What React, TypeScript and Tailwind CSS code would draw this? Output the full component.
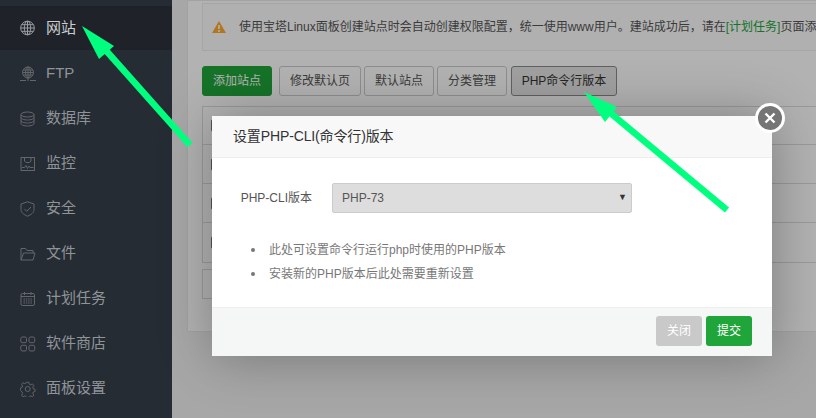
import type { ReactNode } from 'react'

const font = '[font-family:"Liberation_Sans","Noto_Sans_CJK_SC",sans-serif]'

function Icon({ children }: { children: ReactNode }) {
  return (
    <svg width="16" height="16" viewBox="0 0 16 16" fill="none" stroke="currentColor" strokeWidth="1" className="shrink-0">
      {children}
    </svg>
  )
}

const menu: { label: string; active?: boolean; icon: ReactNode }[] = [
  {
    label: '网站',
    active: true,
    icon: (
      <Icon>
        <circle cx="7.500" cy="8" r="6.800" />
        <ellipse cx="7.500" cy="8" rx="3.200" ry="6.800" />
        <path d="M.7 8h13.600M1.700 4.700h11.600M1.700 11.300h11.600M7.500 1.200v13.600" />
      </Icon>
    ),
  },
  {
    label: 'FTP',
    icon: (
      <Icon>
        <circle cx="8" cy="6.500" r="5.500" />
        <ellipse cx="8" cy="6.500" rx="2.500" ry="5.500" />
        <path d="M2.500 6.500h11M3 4h10M3 9h10M8 1v14M0 14.500h6M10 14.500h6" />
      </Icon>
    ),
  },
  {
    label: '数据库',
    icon: (
      <Icon>
        <ellipse cx="7.500" cy="3.500" rx="6.500" ry="2.500" />
        <path d="M1 3.500v9c0 1.400 3 2.500 6.500 2.500s6.500-1.100 6.500-2.500v-9M1 6.500c0 1.400 3 2.500 6.500 2.500S14 7.900 14 6.500M1 9.500c0 1.400 3 2.500 6.500 2.500S14 10.900 14 9.500" />
      </Icon>
    ),
  },
  {
    label: '监控',
    icon: (
      <Icon>
        <rect x="1" y="1.500" width="13.500" height="13" />
        <path d="M4.500 2v3l1.500 1.500h3.500L11 5V2M2 11.500h2.500l1.500-2 1.500 3 1.500-2.500 1 1.500h3.500" />
      </Icon>
    ),
  },
  {
    label: '安全',
    icon: (
      <Icon>
        <path d="M7.500 .8 14 3v5.500c0 3-2.500 5-6.500 6.700C3.500 13.500 1 11.500 1 8.500V3z" />
        <path d="M4.500 8l2.300 2.300L11 6" />
      </Icon>
    ),
  },
  {
    label: '文件',
    icon: (
      <Icon>
        <path d="M1 14V2.500h4.500l1.500 2h6V7M1 14h12l2-7H3.500z" />
      </Icon>
    ),
  },
  {
    label: '计划任务',
    icon: (
      <Icon>
        <rect x="1" y="2.500" width="13.500" height="12" rx="1.500" />
        <path d="M4.500 1v3M11 1v3M1 5.500h13.500" />
        <path d="M3.500 8h8.500M3.500 10h8.500M3.500 12h8.500" strokeDasharray="1.500 .8" />
      </Icon>
    ),
  },
  {
    label: '软件商店',
    icon: (
      <Icon>
        <rect x=".8" y="1" width="5.700" height="5.700" rx="1.500" />
        <rect x="9" y="1" width="5.700" height="5.700" rx="1.500" />
        <rect x=".8" y="9.300" width="5.700" height="5.700" rx="1.500" />
        <rect x="9" y="9.300" width="5.700" height="5.700" rx="1.500" />
      </Icon>
    ),
  },
  {
    label: '面板设置',
    icon: (
      <Icon>
        <circle cx="7.700" cy="8" r="2.500" />
        <path d="M6.500 1h2.400l.4 2 1.500.7 1.800-1 1.500 1.800-1.100 1.700.5 1.500 1.900.6v2.300l-1.900.6-.5 1.500 1.100 1.700-1.500 1.800-1.800-1-1.500.7-.4 2H6.500l-.4-2-1.500-.7-1.800 1-1.500-1.800 1.100-1.700-.5-1.500L0 9.300V7l1.900-.6.500-1.500-1.100-1.700 1.500-1.800 1.800 1 1.500-.7z" transform="translate(.3 .3) scale(.96)" />
      </Icon>
    ),
  },
]

const pageButtons = [
  { label: '修改默认页', width: 'w-[82px]' },
  { label: '默认站点', width: 'w-[70px]' },
  { label: '分类管理', width: 'w-[70px]' },
]

// the two arrows drawn over the screenshot
function Arrow({ x1, y1, x2, y2, head }: { x1: number; y1: number; x2: number; y2: number; head: string }) {
  return (
    <svg width="816" height="418" viewBox="0 0 816 418" className="pointer-events-none absolute left-0 top-0 z-50">
      <line x1={x1} y1={y1} x2={x2} y2={y2} stroke="#00ff7f" strokeWidth="6.500" />
      <polygon points={head} fill="#00ff7f" />
    </svg>
  )
}

export default function App() {
  return (
    <div className={`relative flex h-[418px] w-[816px] overflow-hidden bg-[#f0f0f0] ${font}`}>
      <aside className="z-20 flex w-[172px] shrink-0 flex-col bg-[#262c33] pt-[6px]">
        {menu.map((m) => (
          <div
            key={m.label}
            className={`flex items-center gap-[10px] pl-[20px] text-[15px] ${
              m.active ? 'mb-px h-[44px] bg-[#1f2329] text-[#c9cdd1]' : 'h-[45px] text-[#8f9499]'
            }`}
          >
            <span className={m.active ? 'text-[#9a9ea3]' : 'text-[#62676c]'}>{m.icon}</span>
            <span>{m.label}</span>
          </div>
        ))}
      </aside>

      <main className="flex-1 overflow-hidden pl-[15px]">
        <div className="h-[332px] w-[660px] border border-[#e8e8e8] bg-white pl-[14px]">
          <div className="mt-[2px] flex h-[48px] items-center gap-[13px] border border-[#ececec] bg-[#fdfdfd] pl-[9px] text-[12px] text-[#555]">
            <svg width="14" height="12" viewBox="0 0 14 12" className="shrink-0">
              <path d="M7 0 14 12H0z" fill="#ffa92c" />
              <path d="M7 4v4M7 9v2" stroke="#fff" strokeWidth="1.600" />
            </svg>
            <span className="whitespace-nowrap">
              使用宝塔Linux面板创建站点时会自动创建权限配置，统一使用www用户。建站成功后，请在<span className="text-[#20a53a]">[计划任务]</span>页面添
            </span>
          </div>
          <div className="mt-[15px] flex gap-[3px]">
            <button className="mr-[4px] h-[30px] w-[70px] rounded-[3px] border border-[#20a53a] bg-[#20a53a] text-[12px] text-white">添加站点</button>
            {pageButtons.map((b) => (
              <button key={b.label} className={`h-[30px] rounded-[3px] border border-[#ccc] bg-white text-[12px] text-[#555] ${b.width}`}>
                {b.label}
              </button>
            ))}
            <button className="ml-px h-[30px] w-[106px] rounded-[3px] border border-[#8c8c8c] bg-[#e6e6e6] text-[12px] text-[#333]">PHP命令行版本</button>
          </div>
          <div className="mt-[10px] border border-[#ddd]">
            {[0, 1, 2, 3].map((i) => (
              <div key={i} className={`flex items-center border-b border-[#ddd] pl-[8px] last:border-b-0 ${i === 0 ? 'h-[38px]' : 'h-[39px]'}`}>
                <span className="size-[13px] rounded-[2px] border border-[#777]" />
              </div>
            ))}
          </div>
          <div className="mt-[6px] h-[30px] w-[90px] border border-[#ddd]" />
        </div>
      </main>

      {/* layer: overlay over the page, not the sidebar */}
      <div className="absolute inset-0 z-10 bg-black/30" />

      <div className="absolute left-[212px] top-[116px] z-30 flex h-[240px] w-[560px] flex-col bg-white text-[#555] shadow-[1px_1px_50px_rgba(0,0,0,0.3)]">
        <div className="flex h-[42px] items-center border-b border-[#eee] bg-[#f8f8f8] pl-[21px] text-[14px] tracking-[-0.13px] text-[#333]">设置PHP-CLI(命令行)版本</div>
        <div className="flex-1">
          <div className="mt-[25px] flex items-center">
            <span className="w-[120px] pr-[20px] text-right text-[12px] text-[#555]">PHP-CLI版本</span>
            <div className="flex h-[30px] w-[300px] items-center justify-between rounded-[2px] border border-[#ccc] bg-[#ddd] pl-[9px] pr-[4px] text-[12px] text-[#555]">
              <span>PHP-73</span>
              <span className="text-[9px] text-[#333]">▼</span>
            </div>
          </div>
          <ul className="mt-[28px] flex flex-col gap-[6px] pl-[39px] text-[12px] text-[#777]">
            <li className="flex h-[18px] items-center gap-[14px]">
              <span className="size-[4px] rounded-full bg-[#777]" />
              此处可设置命令行运行php时使用的PHP版本
            </li>
            <li className="flex h-[18px] items-center gap-[14px]">
              <span className="size-[4px] rounded-full bg-[#777]" />
              安装新的PHP版本后此处需要重新设置
            </li>
          </ul>
        </div>
        <div className="flex h-[49px] items-start justify-end gap-[4px] border-t border-[#eee] bg-[#f5f7f7] pr-[20px] pt-[8px]">
          <button className="h-[30px] w-[46px] rounded-[3px] bg-[#c9c9c9] text-[12px] text-white">关闭</button>
          <button className="h-[30px] w-[46px] rounded-[3px] bg-[#20a53a] text-[12px] text-white">提交</button>
        </div>
      </div>

      <div className="absolute left-[755px] top-[103px] z-40 flex size-[30px] items-center justify-center rounded-full border-[3px] border-white bg-[#757575]">
        <svg width="14" height="14" viewBox="0 0 14 14" stroke="#fff" strokeWidth="2.400">
          <path d="M2.500 2.500l9 9M11.500 2.500l-9 9" />
        </svg>
      </div>

      <Arrow x1={190} y1={145} x2={102} y2={46} head="82,26 114,46 99,59" />
      <Arrow x1={727} y1={210} x2={608} y2={111} head="584,92 617,107 605,122" />
    </div>
  )
}
